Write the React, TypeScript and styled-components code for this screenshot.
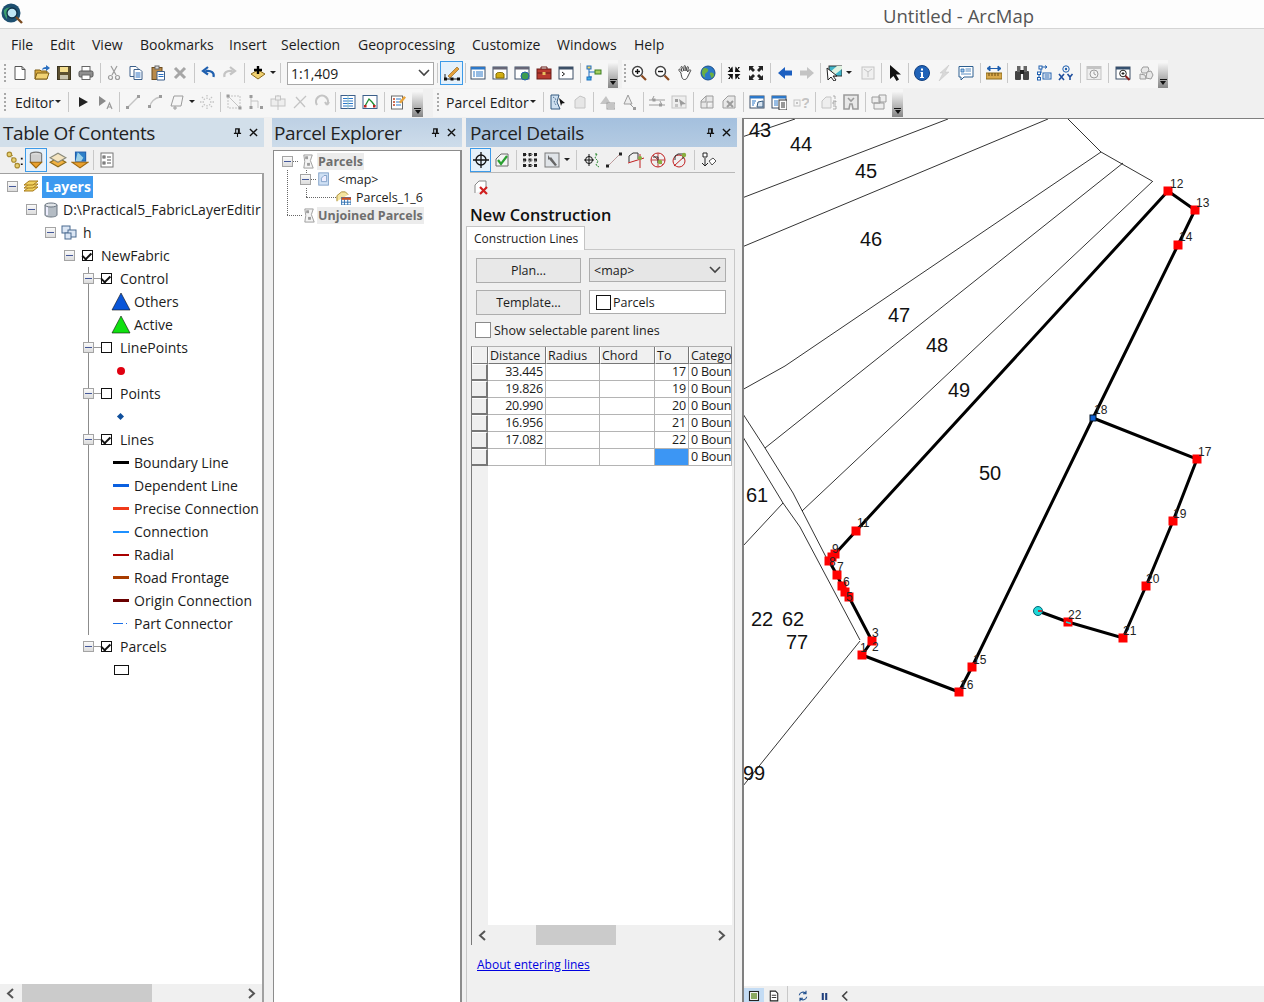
import React from "react";
import styled, { createGlobalStyle } from "styled-components";

const Global = createGlobalStyle`
  html, body { margin: 0; padding: 0; background: #f0f0f0; }
  #root { height: 1002px; overflow: hidden; }
  * { box-sizing: border-box; }
`;

const UI = `"Open Sans", "Noto Sans", "Liberation Sans", sans-serif`;
const D = "#c4c4c4";
const D2 = "#9c9c9c";

const win = (c = "#1f6fc0") => (
  <>
    <rect x="1" y="2" width="14" height="12" fill="#fff" stroke="#3c4f66" />
    <rect x="1" y="2" width="14" height="2.5" fill={c} />
  </>
);
const ghostParcel = <path d="M3 14V6l5-4 5 2v10z" fill="#e6e6e6" stroke={D} />;

const I: Record<string, React.ReactNode> = {
  new: <path d="M3 1.5h7l3 3v10H3zM10 1.5v3h3" fill="#fff" stroke="#555" />,
  open: (
    <>
      <path d="M1 5h5l1 1h6v8H1z" fill="#d9a93c" stroke="#7f5f16" />
      <path d="M1 14l2-6h12l-2 6z" fill="#f2d272" stroke="#7f5f16" />
      <path d="M8 5c0-2 2-3 4-3V0l4 3-4 3V4c-2 0-3 0-4 1z" fill="#2a6fc0" />
    </>
  ),
  save: (
    <>
      <rect x="1.5" y="1.5" width="13" height="13" fill="#5c5030" stroke="#3a3420" />
      <rect x="4" y="2" width="8" height="5" fill="#f3dd8e" />
      <rect x="4" y="10" width="8" height="4.5" fill="#c9c4b0" />
    </>
  ),
  print: (
    <>
      <rect x="4" y="1.5" width="8" height="5" fill="#fff" stroke="#666" />
      <rect x="1" y="6" width="14" height="6" rx="1.5" fill="#8f8f8f" stroke="#555" />
      <rect x="4" y="10" width="8" height="4.5" fill="#fff" stroke="#666" />
    </>
  ),
  cut: (
    <g stroke={D2} fill="none" strokeWidth="1.2">
      <path d="M5 1l5 9M11 1L6 10" />
      <circle cx="4.5" cy="12.5" r="2" />
      <circle cx="11.5" cy="12.5" r="2" />
    </g>
  ),
  copy: (
    <>
      <path d="M2 1.5h6l2 2v8H2z" fill="#fff" stroke="#3c5f8a" />
      <path d="M6 4.5h6l2 2v8H6z" fill="#fff" stroke="#3c5f8a" />
      <path d="M7.5 8h5M7.5 10h5M7.5 12h5" stroke="#2a6fc0" />
    </>
  ),
  paste: (
    <>
      <rect x="2" y="2.5" width="10" height="12" fill="#b98a4a" stroke="#6d4c1e" />
      <rect x="5" y="1" width="4" height="3" fill="#ddd" stroke="#666" />
      <path d="M7 6.5h7.5v8.5H7z" fill="#fff" stroke="#3c5f8a" />
      <path d="M8.5 9.5h5M8.5 11.5h5" stroke="#2a6fc0" />
    </>
  ),
  del: <path d="M3 3l10 10M13 3L3 13" stroke="#a6a6a6" strokeWidth="3" />,
  undo: <path d="M13.5 12c1-4-2-7-8-6M8 2L3 6l5 3.5" fill="none" stroke="#1f5fae" strokeWidth="2.2" />,
  redo: <path d="M2.5 12c-1-4 2-7 8-6M8 2l5 4-5 3.5" fill="none" stroke={D} strokeWidth="2.2" />,
  add: (
    <>
      <path d="M1 9l7-4 7 4-7 5z" fill="#f0d070" stroke="#8a6a1c" />
      <path d="M8 1v8M4 5h8" stroke="#000" strokeWidth="2.4" />
    </>
  ),
  edit: (
    <>
      <path d="M4 11L13 2l2 2-9 9z" fill="#e6a23c" stroke="#8a5a10" strokeWidth=".6" />
      <path d="M1 14h14" stroke="#222" />
      <path d="M1 9v5" stroke="#222" />
      <rect x="0" y="12.5" width="3" height="3" fill="#111" />
      <rect x="6.5" y="12.5" width="3" height="3" fill="#111" />
      <rect x="13" y="12.5" width="3" height="3" fill="#111" />
    </>
  ),
  list: (
    <>
      {win("#2d78c8")}
      <path d="M3 7h2M3 9h2M3 11h2M6 7h7M6 9h7M6 11h7" stroke="#2d78c8" />
    </>
  ),
  cat: (
    <>
      {win("#667")}
      <ellipse cx="8" cy="9" rx="4" ry="1.5" fill="#e2c020" stroke="#806a00" />
      <path d="M4 9v4h8V9" fill="#d0ac10" stroke="#806a00" />
    </>
  ),
  srch: (
    <>
      {win("#667")}
      <circle cx="11" cy="11" r="4" fill="#3c9c50" stroke="#1f5fae" />
    </>
  ),
  box: (
    <>
      <rect x="1" y="4" width="14" height="10" fill="#b93a30" stroke="#6a1c18" />
      <path d="M5 4V2h6v2M1 8h14" fill="none" stroke="#6a1c18" />
      <rect x="6.5" y="7" width="3" height="3" fill="#e8c060" />
    </>
  ),
  py: (
    <>
      {win("#3c4f66")}
      <path d="M4 7l2.5 2L4 11" fill="none" stroke="#111" />
    </>
  ),
  model: (
    <>
      <path d="M3 4v8h3M3 7h7" fill="none" stroke="#1f6fc0" />
      <rect x="1" y="1" width="4" height="3" fill="#f0d060" stroke="#1f6fc0" />
      <rect x="1" y="12" width="4" height="3" fill="#3fb0e0" stroke="#1f6fc0" />
      <rect x="9" y="5" width="6" height="4" fill="#a6d060" stroke="#3c7c20" />
    </>
  ),
  zin: (
    <>
      <circle cx="6.5" cy="6.5" r="5" fill="#fff" stroke="#444" strokeWidth="1.4" />
      <path d="M4 6.5h5M6.5 4v5" stroke="#111" strokeWidth="1.4" />
      <path d="M10.5 10.5l4.5 4.5" stroke="#8a4a20" strokeWidth="2.2" />
    </>
  ),
  zout: (
    <>
      <circle cx="6.5" cy="6.5" r="5" fill="#fff" stroke="#444" strokeWidth="1.4" />
      <path d="M4 6.5h5" stroke="#111" strokeWidth="1.4" />
      <path d="M10.5 10.5l4.5 4.5" stroke="#8a4a20" strokeWidth="2.2" />
    </>
  ),
  hand: (
    <path
      d="M4 8L2 5.5c-.8-1 .4-1.8 1.2-1L5 6.5 4 2.5c-.2-1.2 1.2-1.3 1.5-.3L7 6 7 1.5c0-1.2 1.5-1.2 1.5 0L9 6l1-3.8c.3-1 1.6-.7 1.4.4L10.500 7l1.800-2c.8-.8 1.900.1 1.200 1L11 11c-.8 2-1.500 3.500-3.500 3.500-2 0-2.800-1.500-3.500-6.500z"
      fill="#fff"
      stroke="#333"
      strokeWidth=".9"
    />
  ),
  globe: (
    <>
      <circle cx="8" cy="8" r="7" fill="#2a78c8" stroke="#1c4f8a" />
      <path d="M4 3c3 0 5 1 4 3S4 8 5 11s-3 0-3-3 1-4 2-5zM10 8c2-1 4 0 4 2s-3 4-3 2-2-3-1-4z" fill="#6cb040" />
    </>
  ),
  fzin: <path d="M2 2h2v2L6.500 1.500 7 7H1.500L4 4.500zM14 2h-2v2L9.500 1.500 9 7h5.500L12 4.500zM2 14h2v-2l2.500 2.500L7 9H1.500L4 11.500zM14 14h-2v-2l-2.500 2.500L9 9h5.500L12 11.500z" fill="#111" />,
  fzout: <path d="M1 1h5L4.500 2.500 7 5 5 7 2.500 4.500 1 6zM15 1h-5l1.500 1.500L9 5l2 2 2.500-2.500L15 6zM1 15h5l-1.500-1.500L7 11 5 9l-2.500 2.500L1 10zM15 15h-5l1.500-1.500L9 11l2-2 2.500 2.500L15 10z" fill="#222" />,
  back: <path d="M1 8l7-6v3.500h7v5H8V14z" fill="#1c5fc0" />,
  fwd: <path d="M15 8L8 2v3.500H1v5h7V14z" fill={D} />,
  sel: (
    <>
      <rect x="3" y="1" width="13" height="10" fill="#3fb4c8" stroke="#333" />
      <path d="M3 8l8-7h5v3L7 11H3z" fill="#dff2e0" />
      <path d="M1 3l1 12 3-3 3 4 2-1-3-4h4z" fill="#fff" stroke="#222" />
    </>
  ),
  clear: (
    <>
      <rect x="2" y="2" width="12" height="12" fill="#f0f0f0" stroke={D} />
      <path d="M4 4l4 3 4-3M8 7v5" fill="none" stroke={D} />
    </>
  ),
  arrow: <path d="M3 0l0 14 3.500-3 3 5 2.500-1.500-3-5H14z" fill="#111" />,
  info: (
    <>
      <circle cx="8" cy="8" r="7.500" fill="#1f62b8" stroke="#124080" />
      <path d="M7 3.500h2v2H7zM6.500 7H9v5h1v1H6v-1h1V8h-.5z" fill="#fff" />
    </>
  ),
  flash: <path d="M13 0L4 8h3l-4 8 10-9H9z" fill="#d8d8d8" stroke={D} strokeWidth=".5" />,
  html: (
    <>
      <path d="M1 1.500h14V12H6l-3 3v-3H1z" fill="#fff" stroke="#2d5f90" />
      <path d="M3 4h3v3H3zM7.500 4H13M7.500 6H13M3 9h10" fill="#9cc4e8" stroke="#2d6fb0" strokeWidth=".8" />
    </>
  ),
  measure: (
    <>
      <path d="M1 3.500h14M1 3.500l3-2.500v5zM15 3.500l-3-2.500v5z" fill="#1f5fae" stroke="#1f5fae" />
      <rect x="0" y="8" width="16" height="6" fill="#d8a84a" stroke="#8a6a1c" />
      <path d="M3 8v3M6 8v3M9 8v3M12 8v3" stroke="#6a4a10" />
    </>
  ),
  bin: (
    <>
      <rect x="1" y="6" width="6" height="9" rx="1" fill="#444" />
      <rect x="9" y="6" width="6" height="9" rx="1" fill="#444" />
      <rect x="3" y="1" width="3.500" height="6" fill="#666" />
      <rect x="9.500" y="1" width="3.500" height="6" fill="#666" />
      <rect x="6" y="5" width="4" height="4" fill="#222" />
    </>
  ),
  route: (
    <>
      <path d="M5 2h6l-2-1.500M11 2L9 3.500M5 2v6M3 8v5" fill="none" stroke="#1f5fae" />
      <rect x="3" y="1" width="3" height="3" fill="#fff" stroke="#1f5fae" />
      <rect x="1.500" y="7" width="3" height="2.500" fill="#fff" stroke="#1f5fae" />
      <rect x="1.500" y="12.500" width="3" height="2.500" fill="#fff" stroke="#1f5fae" />
      <rect x="7" y="8" width="8" height="6" fill="#fff" stroke="#1f5fae" />
      <path d="M8.500 10h5M8.500 12h5" stroke="#1f5fae" />
    </>
  ),
  xy: (
    <>
      <circle cx="8" cy="4" r="3.200" fill="none" stroke="#1f5fae" />
      <circle cx="8" cy="4" r="1.200" fill="#1f5fae" />
      <path d="M1 9l5 6M6 9l-5 6M9.500 9l2.500 3 2.500-3M12 12v3" fill="none" stroke="#1f4f9e" strokeWidth="1.600" />
    </>
  ),
  time: (
    <>
      <rect x="1" y="1.500" width="14" height="13" fill="#eee" stroke={D} />
      <rect x="1" y="1.500" width="14" height="2.500" fill={D} />
      <circle cx="8" cy="9" r="4" fill="#f4f4f4" stroke={D2} />
      <path d="M8 6.500V9l2 1" fill="none" stroke={D2} />
    </>
  ),
  viewer: (
    <>
      {win("#35506e")}
      <circle cx="8" cy="8.500" r="3.300" fill="#fff" stroke="#222" />
      <path d="M6.500 8.500h3M8 7v3" stroke="#222" />
      <path d="M10.500 11l4 4" stroke="#8a2020" strokeWidth="2" />
    </>
  ),
  comp: (
    <g fill="#e8e8e8" stroke={D2}>
      <path d="M5 2l5 0 1 3-2 3H4L3 5z" />
      <path d="M9 7l4-1 2 4-2 4-5-1z" />
      <path d="M2 9l5 1 1 4H2z" />
    </g>
  ),
  play: <path d="M4 3l9 5-9 5z" fill="#222" />,
  anno: (
    <>
      <path d="M2 2l7 5-7 5z" fill="#8a8a8a" />
      <path d="M10 15l2.500-6 2.500 6M11 13h3" fill="none" stroke={D2} strokeWidth="1.200" />
    </>
  ),
  seg: (
    <>
      <path d="M3 13L13 3" stroke={D} strokeWidth="1.400" />
      <rect x="1" y="12" width="3" height="3" fill={D2} />
      <rect x="12" y="1" width="3" height="3" fill={D2} />
    </>
  ),
  arc: (
    <>
      <path d="M3 13C3 8 8 4 13 3" fill="none" stroke={D} strokeWidth="1.400" />
      <rect x="1" y="11" width="3" height="3" fill={D2} />
      <rect x="12" y="1" width="3" height="3" fill={D2} />
    </>
  ),
  poly: (
    <>
      <path d="M5 2h9l-2 10H2z" fill="none" stroke={D2} />
      <path d="M6 12v4M4 14h4" stroke={D2} />
    </>
  ),
  expl: (
    <path d="M8 1v4M8 11v4M1 8h4M11 8h4M3 3l3 3M13 3l-3 3M3 13l3-3M13 13l-3-3" stroke={D} strokeWidth="1.300" strokeDasharray="1.500 1" />
  ),
  rot: (
    <>
      <path d="M2 2h12v12H2z" fill="none" stroke={D} strokeDasharray="2 1" />
      <path d="M2 2l12 12" stroke={D} />
      <rect x="0.500" y="0.500" width="3" height="3" fill={D2} />
      <rect x="12.500" y="12.500" width="3" height="3" fill={D2} />
    </>
  ),
  splt: (
    <>
      <path d="M3 2v12M10 7v7M3 7h7" stroke={D} />
      <rect x="1.500" y="1" width="3" height="3" fill={D2} />
      <rect x="1.500" y="12" width="3" height="3" fill={D2} />
      <rect x="12" y="12" width="3" height="3" fill={D2} />
    </>
  ),
  cross: (
    <>
      <rect x="1" y="5" width="14" height="7" fill="#eee" stroke={D} />
      <path d="M8 1v15" stroke={D} />
      <rect x="5.500" y="2" width="5" height="4" fill="#eee" stroke={D} />
    </>
  ),
  knife: <path d="M2 14L14 2M4 3l9 10" stroke={D} strokeWidth="1.300" />,
  circ: <path d="M3 11a6 6 0 1 1 10 0M13 11l-2-3M13 11l2-3" fill="none" stroke={D} strokeWidth="2.200" />,
  attr: (
    <>
      <rect x="1" y="1.500" width="14" height="13" fill="#fff" stroke="#3c5f8a" />
      <path d="M3 4.500h10M3 7h10M3 9.500h10M3 12h10" stroke="#2d78c8" />
      <path d="M8 1.500v13" stroke="#9cc" />
    </>
  ),
  sketch: (
    <>
      <rect x="1" y="1.500" width="14" height="13" fill="#fff" stroke="#3c5f8a" />
      <path d="M3 12l4-7 3 3 3 4" fill="none" stroke="#1e8a30" strokeWidth="1.300" />
      <rect x="2" y="11" width="2.500" height="2.500" fill="#c02020" />
      <rect x="11" y="11" width="2.500" height="2.500" fill="#c02020" />
    </>
  ),
  task: (
    <>
      <rect x="1.500" y="2" width="11" height="13" fill="#fff" stroke="#6a6a6a" />
      <path d="M3 5h2M3 8h2M3 11h2" stroke="#c04020" strokeWidth="1.500" />
      <path d="M6 5h5M6 8h5M6 11h5" stroke="#2d78c8" />
      <path d="M9 8l5-6 2 1.500-5 6z" fill="#e6a23c" />
    </>
  ),
  pe1: (
    <>
      <path d="M1 1h8l-2 7 3 7H1z" fill="#cfe0f0" stroke="#345a80" />
      <path d="M3 3l3 2-2 3 2 3" fill="none" stroke="#345a80" strokeDasharray="1 1" />
      <path d="M9 4l6 5-3 .5L11 12z" fill="#111" />
    </>
  ),
  pe2: ghostParcel,
  tri: (
    <>
      <path d="M7 2l5 8H1z" fill={D} />
      <rect x="8" y="9" width="8" height="6" fill="#eee" stroke={D2} />
      <path d="M9 11h6M9 13h6" stroke={D2} />
    </>
  ),
  tri2: (
    <>
      <path d="M7 1L3 10h8z" fill="#eee" stroke={D2} />
      <path d="M9 10l4 4" stroke={D2} />
      <rect x="12" y="13" width="3" height="3" fill={D2} />
    </>
  ),
  jog: (
    <>
      <path d="M0 6h16M0 11h16" stroke={D2} />
      <path d="M5 2l-2 4M11 7l2 4" stroke={D2} />
      <rect x="3.500" y="4.500" width="3" height="3" fill={D2} />
      <rect x="10" y="9.500" width="3" height="3" fill={D2} />
    </>
  ),
  mvto: (
    <>
      <rect x="1" y="2" width="14" height="12" fill="#eee" stroke={D} />
      <rect x="4" y="5" width="3" height="3" fill={D2} />
      <rect x="4" y="10" width="3" height="3" fill={D} />
      <path d="M8 5l7 5-4 .5-1 3z" fill={D2} />
    </>
  ),
  p3: <path d="M2 14V7l5-5h7v12zM7 2v6H2M14 8H8v6" fill="#e8e8e8" stroke={D2} />,
  p4: (
    <>
      <path d="M2 14V7l5-5h7v12z" fill="#e8e8e8" stroke={D2} />
      <path d="M6 7l6 6M12 7l-6 6" stroke={D2} strokeWidth="2" />
    </>
  ),
  pwin: (
    <>
      {win("#2d78c8")}
      <path d="M3 7h4M3 9h3M3 11h2" stroke="#2d78c8" />
      <path d="M8 13l1-5 5-1v6z" fill="#d8e4f0" stroke="#345a80" />
    </>
  ),
  pwin2: (
    <>
      {win("#2d78c8")}
      <path d="M3 7h4M3 9h4M3 11h4" stroke="#2d78c8" />
      <rect x="8" y="6" width="8" height="10" fill="#fff" stroke="#333" />
      <path d="M10 9h4M10 11h4M10 13h4" stroke="#333" />
    </>
  ),
  q: (
    <>
      <rect x="1" y="6" width="6" height="6" fill="none" stroke={D} />
      <rect x="3" y="8" width="2" height="2" fill={D} />
      <text x="8" y="14" fontFamily="Liberation Sans" fontSize="15" fontWeight="700" fill={D}>?</text>
    </>
  ),
  p123: (
    <>
      <path d="M1 14V7l4-4h5v11z" fill="#eee" stroke={D} />
      <path d="M12 2h2v3M12 7h3v1h-3v2h3M12 12h3v3h-3" fill="none" stroke={D2} strokeWidth=".8" />
    </>
  ),
  pg: (
    <g fill="none" stroke={D2} strokeWidth="1.600">
      <path d="M1 1h14v14h-5l-1-5H7l-1 5H1z" fill="#e8e8e8" />
      <path d="M5 4l3 3 3-3" />
    </g>
  ),
  pg2: (
    <g fill="#eee" stroke={D2}>
      <path d="M1 3h8v6H1zM8 1h7v7H8zM3 9h10v6H3z" />
    </g>
  ),
  tocA: (
    <>
      <path d="M3 4h3M4 4l6 9" stroke="#a88a30" strokeDasharray="1 1" />
      <rect x="1" y="1" width="4" height="4" rx="2" fill="#e8d070" stroke="#a88a30" />
      <rect x="5" y="6" width="4" height="4" rx="2" fill="#e8d070" stroke="#a88a30" />
      <rect x="8" y="11" width="4" height="4" rx="2" fill="#e8d070" stroke="#a88a30" />
      <path d="M14 6v1.500M14 11v1.500" stroke="#111" strokeWidth="1.600" />
    </>
  ),
  tocB: (
    <>
      <ellipse cx="8" cy="3" rx="5" ry="2" fill="#ddd" stroke="#777" />
      <path d="M3 3v6c0 1 2 2 5 2s5-1 5-2V3" fill="#cfcfcf" stroke="#777" />
      <path d="M3 10l5 5 5-5z" fill="#e8a030" stroke="#a06a10" />
    </>
  ),
  tocC: (
    <>
      <path d="M1 10l7 4 7-4-7-4z" fill="#f0b040" stroke="#8a6a1c" />
      <path d="M1 6l7-4 7 4-7 4z" fill="#f4e4c0" stroke="#8a8a7a" />
    </>
  ),
  tocD: (
    <>
      <rect x="4" y="1" width="9" height="8" fill="#2d80c8" stroke="#1f5fae" />
      <path d="M6 1l5 5-2 3H4z" fill="#9cd0e8" />
      <path d="M1 10l7 5 7-5z" fill="#e8a030" stroke="#a06a10" />
    </>
  ),
  tocE: (
    <>
      <rect x="2" y="1" width="12" height="14" fill="#fff" stroke="#777" />
      <rect x="4" y="4" width="2" height="2" fill="none" stroke="#555" />
      <rect x="4" y="10" width="2" height="2" fill="none" stroke="#555" />
      <path d="M8 5h4M8 8h4M8 11h4" stroke="#555" />
    </>
  ),
  layers: (
    <g fill="#f0d060" stroke="#a87a18">
      <path d="M1 12l5-4h9l-5 4z" />
      <path d="M1 9l5-4h9l-5 4z" />
      <path d="M1 6l5-4h9l-5 4z" />
    </g>
  ),
  db: (
    <>
      <path d="M2 3v10c0 1 2.500 2 6 2s6-1 6-2V3z" fill="#b4bcc4" stroke="#6a7480" />
      <path d="M4 4v9" stroke="#eef" strokeWidth="2" />
      <ellipse cx="8" cy="3" rx="6" ry="2" fill="#e0e4e8" stroke="#6a7480" />
    </>
  ),
  fds: (
    <g fill="#dbe6f4" stroke="#4a6a90">
      <rect x="1" y="1" width="8" height="7" />
      <rect x="7" y="5" width="8" height="7" />
      <rect x="4" y="8" width="6" height="6" />
    </g>
  ),
  par: (
    <g fill="#f4f4f4" stroke={D2}>
      <path d="M3 1h9l-2 6 3 8H3l1-7z" />
      <rect x="5" y="3" width="2" height="2" fill={D2} />
      <rect x="7" y="10" width="2" height="2" fill={D2} />
    </g>
  ),
  plan: (
    <>
      <rect x="2" y="1" width="11" height="14" fill="#cfe0f4" stroke="#7a9cc4" />
      <path d="M5 11V7l3-3h3v7z" fill="#eef" stroke="#7a9cc4" />
    </>
  ),
  tbl: (
    <>
      <path d="M1 12V6l5-4h4l3 3" fill="#f4e4a0" stroke="#a88a30" />
      <rect x="6" y="8" width="10" height="8" fill="#fff" stroke="#2d6fb0" />
      <rect x="6" y="8" width="10" height="2.500" fill="#d05020" />
      <path d="M6 13h10M9 10v6M12.500 10v6" stroke="#2d6fb0" />
    </>
  ),
  cross2: (
    <>
      <circle cx="8" cy="8" r="5" fill="none" stroke="#111" strokeWidth="1.300" />
      <path d="M8 0v16M0 8h16" stroke="#111" strokeWidth="1.300" />
    </>
  ),
  chk: (
    <>
      <path d="M2 14V7l5-5h7v12z" fill="#f4f4f4" stroke="#6a6a6a" />
      <path d="M4 8l3 4 6-8" fill="none" stroke="#2aa030" strokeWidth="2.200" />
    </>
  ),
  gridd: (
    <g fill="#222">
      {[1, 6.500, 12].map((x) =>
        [1, 6.500, 12].map((y) => <rect key={`${x}${y}`} x={x} y={y} width="3" height="3" />)
      )}
      <path d="M2 4v8M7.500 4v8M13 4v8M4 2.500h8M4 8h8M4 13.500h8" stroke="#888" strokeDasharray="1 1" strokeWidth=".8" fill="none" />
    </g>
  ),
  wrench: (
    <>
      <rect x="1" y="1" width="14" height="14" fill="#e0e4e8" stroke="#7a7a7a" />
      <path d="M4 3l2 3 1-1 6 8-2 1-6-7-1 1z" fill="#666" />
    </>
  ),
  tr1: (
    <>
      <circle cx="5" cy="8" r="3.500" fill="none" stroke="#111" />
      <path d="M5 2v12M0 8h10" stroke="#111" />
      <path d="M11 2h3M13 2l-2 4 3 3-2 4 3 2" fill="none" stroke="#2a8a30" strokeDasharray="2 1" />
    </>
  ),
  tr2: (
    <>
      <path d="M2 14L14 2" stroke="#e0a0a0" />
      <path d="M3 13L13 3" stroke="#999" strokeDasharray="1 1" />
      <rect x="0" y="12.500" width="3" height="3" fill="#222" />
      <rect x="13" y="0.500" width="3" height="3" fill="#222" />
    </>
  ),
  tr3: (
    <>
      <path d="M1 10V4l4-3h5v6" fill="none" stroke="#333" />
      <path d="M0 11l16-5" stroke="#c02020" />
      <path d="M12 2v14" stroke="#c02020" />
      <circle cx="12" cy="6" r="2" fill="#8ab040" />
    </>
  ),
  tr4: (
    <>
      <circle cx="8" cy="8" r="7" fill="none" stroke="#c02020" />
      <path d="M8 1v14M1 8h14M3 3l10 10" stroke="#c04040" />
      <path d="M3 5h5v6" fill="none" stroke="#333" />
      <circle cx="10" cy="10" r="2.200" fill="#8ab040" />
    </>
  ),
  tr5: (
    <>
      <circle cx="7" cy="9" r="6" fill="none" stroke="#c02020" />
      <path d="M2 14L14 3" stroke="#c02020" />
      <path d="M3 8V4l3-2h5v5" fill="none" stroke="#333" />
      <circle cx="12" cy="3" r="2.200" fill="#8ab040" />
    </>
  ),
  tr6: (
    <>
      <path d="M3 1h4v4H3z" fill="#fff" stroke="#222" />
      <path d="M5 6v8M2 11l3 3 3-3" fill="none" stroke="#222" />
      <path d="M9 9l4-3 3 3-4 4z" fill="#fff" stroke="#555" />
    </>
  ),
  pdel: (
    <>
      <path d="M2 14V6l4-4h7v8" fill="#fff" stroke="#888" />
      <path d="M7 8l7 7M14 8l-7 7" stroke="#d02020" strokeWidth="2.200" />
    </>
  ),
  stA: (
    <>
      <rect x="2" y="2" width="12" height="12" fill="#fff" stroke="#222" strokeWidth="1.500" />
      <rect x="4" y="4" width="8" height="8" fill="#8aa860" />
    </>
  ),
  stB: (
    <>
      <path d="M3 1.500h7l3 3v10H3z" fill="#fff" stroke="#222" strokeWidth="1.400" />
      <path d="M5 7h6M5 10h6" stroke="#222" strokeWidth="1.200" />
    </>
  ),
  stC: <path d="M3 7a5 5 0 0 1 9-2M13 9a5 5 0 0 1-9 2M12 1v4H8M4 15v-4h4" fill="none" stroke="#1f4f8e" strokeWidth="1.500" />,
  stD: <path d="M4 3h3v10H4zM9 3h3v10H9z" fill="#1f3f7e" />,
  stE: <path d="M11 2L5 8l6 6" fill="none" stroke="#444" strokeWidth="2.200" />,
};

const Ico = ({ n, s = 16 }: { n: string; s?: number }) => (
  <svg width={s} height={s} viewBox="0 0 16 16" aria-hidden="true">
    {I[n]}
  </svg>
);

const Page = styled.div`
  width: 1264px;
  height: 1002px;
  display: flex;
  flex-direction: column;
  background: #f0f0f0;
  font-family: ${UI};
  color: #1c1c1c;
  overflow: hidden;
`;
const TitleBar = styled.header`
  height: 29px;
  flex: none;
  display: flex;
  align-items: center;
  padding-left: 1px;
  background: #fdfdfd;
  border-bottom: 1px solid #d4d4d4;
`;
const Title = styled.div`
  flex: 1;
  text-align: right;
  padding-right: 230px;
  font-size: 18.500px;
  color: #555;
  padding-top: 2px;
`;
const MenuBar = styled.nav`
  height: 31px;
  flex: none;
  display: flex;
  align-items: center;
  padding-left: 11px;
`;
const MenuItem = styled.span<{ $w: number }>`
  width: ${(p) => p.$w}px;
  font-size: 14px;
  white-space: nowrap;
`;
const ToolRow = styled.div`
  height: 29px;
  flex: none;
  display: flex;
  align-items: stretch;
`;
const Bar = styled.div<{ $gap?: number }>`
  display: flex;
  align-items: center;
  background: #f6f6f6;
  margin-left: ${(p) => p.$gap ?? 0}px;
  padding-bottom: 2px;
  height: 28px;
`;
const Grip = styled.span<{ $w: number }>`
  flex: none;
  width: ${(p) => p.$w}px;
  height: 18px;
  background: repeating-linear-gradient(#a8a8a8 0 2px, transparent 2px 4px) center / 2px 100% no-repeat;
`;
const Tool = styled.span<{ $w: number; $on?: boolean }>`
  flex: none;
  width: ${(p) => p.$w}px;
  height: 24px;
  display: flex;
  align-items: center;
  justify-content: center;
  ${(p) => (p.$on ? "background:#e5f1fb;border:1px solid #3c9ae8;" : "")}
`;
const Sep = styled.span<{ $w: number }>`
  flex: none;
  width: ${(p) => p.$w}px;
  height: 20px;
  background: linear-gradient(#c8c8c8, #c8c8c8) center / 1px 100% no-repeat;
`;
const Spacer = styled.span<{ $w: number }>`
  flex: none;
  width: ${(p) => p.$w}px;
`;
const Drop = styled.span`
  flex: none;
  width: 8px;
  height: 4px;
  display: flex;
  justify-content: center;
  &::before {
    content: "";
    border: 3px solid transparent;
    border-top: 3px solid #222;
    border-bottom: 0;
  }
`;
const More = styled.span<{ $w: number; $ml: number }>`
  flex: none;
  align-self: flex-start;
  width: ${(p) => p.$w}px;
  margin: 3px 0 -2px ${(p) => p.$ml}px;
  height: 25px;
  background: linear-gradient(#f4f4f4, #868686);
  display: flex;
  flex-direction: column;
  align-items: center;
  justify-content: flex-end;
  gap: 1px;
  padding-bottom: 3px;
  &::before {
    content: "";
    width: 7px;
    height: 1px;
    background: #111;
  }
  &::after {
    content: "";
    border: 3.500px solid transparent;
    border-top: 4px solid #111;
    border-bottom: 0;
  }
`;
const BarText = styled.span<{ $w: number; $pl: number }>`
  flex: none;
  width: ${(p) => p.$w}px;
  padding-left: ${(p) => p.$pl}px;
  font-size: 14px;
  white-space: nowrap;
  display: flex;
  align-items: center;
`;
const Combo = styled.div`
  flex: none;
  width: 147px;
  height: 23px;
  margin-left: 4px;
  background: #fff;
  border: 1px solid #a8a8a8;
  font-size: 14px;
  display: flex;
  align-items: center;
  justify-content: space-between;
  padding: 0 3px 0 3px;
`;
const Chevron = styled.svg`
  flex: none;
  width: 12px;
  height: 8px;
`;

const items = (list: string) =>
  list.split(" ").map((t, i) => {
    const [n, v] = t.split(":");
    const w = v ? Number(v) : 22;
    if (n === "sep") return <Sep key={i} $w={w} />;
    if (n === "gap") return <Spacer key={i} $w={w} />;
    if (n === "grip") return <Grip key={i} $w={w} />;
    if (n === "drop") return <Drop key={i} />;
    return (
      <Tool key={i} $w={w}>
        <Ico n={n} />
      </Tool>
    );
  });

const Panels = styled.main`
  flex: 1;
  min-height: 0;
  display: flex;
`;
const Panel = styled.section<{ $w: number; $gap?: number }>`
  flex: none;
  width: ${(p) => p.$w}px;
  margin-right: ${(p) => p.$gap ?? 0}px;
  display: flex;
  flex-direction: column;
`;
const PanelHead = styled.div<{ $c: string; $pad?: number }>`
  flex: none;
  height: 29px;
  background: ${(p) => p.$c};
  display: flex;
  align-items: center;
  justify-content: space-between;
  padding: 0 6px 0 ${(p) => p.$pad ?? 3}px;
`;
const PanelTitle = styled.h2`
  margin: 0;
  font-size: 19px;
  font-weight: 400;
  letter-spacing: -0.420px;
  color: #222;
  white-space: nowrap;
`;
const HeadBtns = styled.span`
  display: flex;
  gap: 7px;
  align-items: center;
`;
const Mini = styled.svg`
  width: 9px;
  height: 9px;
`;
const Head = ({ t, c, pad }: { t: string; c: string; pad?: number }) => (
  <PanelHead $c={c} $pad={pad}>
    <PanelTitle>{t}</PanelTitle>
    <HeadBtns>
      <Mini viewBox="0 0 10 10">
        <path d="M3 1h4v5H3zM1 6h8M5 6v4M6 1v5" fill="none" stroke="#111" strokeWidth="1.200" />
      </Mini>
      <Mini viewBox="0 0 10 10">
        <path d="M1 1l8 8M9 1l-8 8" stroke="#111" strokeWidth="1.500" />
      </Mini>
    </HeadBtns>
  </PanelHead>
);

const PaneBar = styled.div`
  height: 26px;
  flex: none;
  display: flex;
  align-items: center;
  padding-left: 4px;
`;
const TreeBox = styled.div`
  flex: 1;
  min-height: 0;
  background: #fff;
  border-top: 1px solid #a0a0a0;
  border-right: 2px solid #a0a0a0;
  display: flex;
  flex-direction: column;
`;
const TreeBody = styled.div`
  flex: 1;
  min-height: 0;
  padding-top: 1px;
  overflow: hidden;
`;
const Row = styled.div<{ $i: number; $trunk?: boolean }>`
  height: 23px;
  display: flex;
  align-items: center;
  padding-left: ${(p) => p.$i}px;
  font-size: 14px;
  white-space: nowrap;
  ${(p) => (p.$trunk ? "background: linear-gradient(#8c8c8c,#8c8c8c) 88px 0 / 1px 100% no-repeat;" : "")}
`;
const Exp = styled.span`
  flex: none;
  width: 11px;
  height: 11px;
  border: 1px solid #a4a4a4;
  background: linear-gradient(#fafafa, #dcdcdc);
  display: flex;
  align-items: center;
  justify-content: center;
  &::before {
    content: "";
    width: 7px;
    height: 1px;
    background: #44589a;
  }
`;
const Hook = styled.span<{ $w: number }>`
  flex: none;
  width: ${(p) => p.$w}px;
  height: 1px;
  background: #9a9a9a;
`;
const Check = styled.span<{ $on?: boolean }>`
  flex: none;
  width: 11px;
  height: 11px;
  border: 1px solid #111;
  background: #fff;
  margin-right: 8px;
  display: flex;
  align-items: center;
  justify-content: center;
  &::before {
    content: "";
    display: ${(p) => (p.$on ? "block" : "none")};
    width: 7px;
    height: 4px;
    border-left: 2px solid #111;
    border-bottom: 2px solid #111;
    transform: rotate(-45deg) translate(0, -1px);
  }
`;
const Sel = styled.span`
  background: #3c9af0;
  color: #fff;
  font-weight: 700;
  padding: 0 2px 0 3px;
  line-height: 22px;
  margin-left: 1px;
`;
const IconSlot = styled.span<{ $w: number }>`
  flex: none;
  width: ${(p) => p.$w}px;
  display: flex;
  align-items: center;
`;
const Sym = styled.span<{ $w?: number }>`
  flex: none;
  width: ${(p) => p.$w ?? 21}px;
  display: flex;
  align-items: center;
`;
const LineSw = styled.span<{ $c: string; $h: number; $dash?: boolean }>`
  width: 16px;
  height: ${(p) => p.$h}px;
  background: ${(p) =>
    p.$dash
      ? `linear-gradient(90deg, ${p.$c} 0 10px, transparent 10px 13px, ${p.$c} 13px 14px, transparent 14px)`
      : p.$c};
`;
const Dot = styled.span`
  width: 8px;
  height: 8px;
  border-radius: 50%;
  margin-left: 4px;
  background: #e00010;
`;
const Diamond = styled.span`
  width: 5px;
  height: 5px;
  margin-left: 5px;
  transform: rotate(45deg);
  background: #0f4f9c;
`;
const Swatch = styled.span`
  width: 15px;
  height: 10px;
  border: 1px solid #111;
  background: #fff;
`;
const HScroll = styled.div<{ $h: number }>`
  flex: none;
  height: ${(p) => p.$h}px;
  background: #f0f0f0;
  display: flex;
  align-items: center;
  justify-content: space-between;
  position: relative;
  padding: 0 6px;
`;
const Thumb = styled.span<{ $l: number; $w: number }>`
  position: absolute;
  top: 0;
  bottom: 0;
  left: ${(p) => p.$l}px;
  width: ${(p) => p.$w}px;
  background: #cbcbcb;
`;
const Chev = ({ d }: { d: "l" | "r" }) => (
  <svg width="9" height="11" viewBox="0 0 9 11" aria-hidden="true">
    <path d={d === "l" ? "M7 1L2 5.500l5 4.500" : "M2 1l5 4.500L2 10"} fill="none" stroke="#555" strokeWidth="2" />
  </svg>
);

const ExplBox = styled.div`
  flex: 1;
  margin-top: 3px;
  margin-left: 1px;
  background: #fff;
  border: 1px solid #8c8c8c;
  border-right: 2px solid #8c8c8c;
  border-bottom: 0;
  padding-top: 1px;
`;
const dots = `repeating-linear-gradient(#666 0 1px, transparent 1px 2px)`;
const ExRow = styled.div<{ $i: number; $v?: string }>`
  height: 18px;
  display: flex;
  align-items: center;
  padding-left: ${(p) => p.$i}px;
  font-size: 12.500px;
  white-space: nowrap;
  background-repeat: no-repeat;
  ${(p) => {
    if (p.$v === "map") return `background-image:${dots},${dots};background-size:1px 100%,1px 5px;background-position:13px 0,32px 0;`;
    if (p.$v === "tbl") return `background-image:${dots},${dots};background-size:1px 100%,1px 9px;background-position:13px 0,32px 0;`;
    if (p.$v === "end") return `background-image:${dots};background-size:1px 9px;background-position:13px 0;`;
    return "";
  }}
`;
const DotLine = styled.span<{ $w: number }>`
  flex: none;
  width: ${(p) => p.$w}px;
  border-top: 1px dotted #666;
`;
const ExLabel = styled.span<{ $dim?: boolean }>`
  ${(p) =>
    p.$dim ? "background:#ececec;color:#6e6e6e;font-weight:700;padding:0 1px;font-size:12.500px;" : ""}
`;

const Section = styled.h3`
  margin: 0;
  padding: 4px 0 0 4px;
  height: 26px;
  flex: none;
  font-size: 16.300px;
  font-weight: 600;
  color: #111;
  white-space: nowrap;
`;
const DetailBar = styled.div`
  flex: none;
  height: 26px;
  margin-left: 4px;
  margin-right: 2px;
  display: flex;
  align-items: center;
  border-bottom: 1px solid #b8b8b8;
`;
const IconLine = styled.div`
  flex: none;
  height: 27px;
  padding-left: 7px;
  display: flex;
  align-items: center;
`;
const Tab = styled.div`
  flex: none;
  width: 119px;
  height: 24px;
  background: #fff;
  border: 1px solid #c4c4c4;
  border-bottom: 0;
  font-size: 12px;
  display: flex;
  align-items: center;
  padding-left: 7px;
  margin-bottom: -1px;
  position: relative;
  z-index: 1;
`;
const TabPanel = styled.div`
  flex: 1;
  min-height: 0;
  width: 269px;
  border: 1px solid #c8c8c8;
  border-bottom: 0;
  padding: 8px 0 0 4px;
  display: flex;
  flex-direction: column;
`;
const FormRow = styled.div`
  flex: none;
  display: grid;
  grid-template-columns: 105px 137px;
  column-gap: 8px;
  padding-left: 5px;
  height: 32px;
  align-items: start;
`;
const Btn = styled.button`
  height: 25px;
  border: 1px solid #adadad;
  background: #e8e8e8;
  font: 12.500px ${UI};
  color: #1c1c1c;
  padding: 0;
`;
const SelectBox = styled.div`
  height: 24px;
  border: 1px solid #adadad;
  background: #e6e6e6;
  font-size: 12.500px;
  display: flex;
  align-items: center;
  justify-content: space-between;
  padding: 0 4px;
`;
const FieldBox = styled.div`
  height: 24px;
  border: 1px solid #adadad;
  background: #fff;
  font-size: 12.500px;
  display: flex;
  align-items: center;
  gap: 2px;
  padding-left: 6px;
`;
const SwatchBig = styled.span`
  width: 15px;
  height: 15px;
  border: 1px solid #111;
  background: #fff;
`;
const CheckLine = styled.label`
  flex: none;
  height: 24px;
  display: flex;
  align-items: center;
  gap: 3px;
  font-size: 12.500px;
  padding-left: 4px;
  margin-top: -4px;
`;
const BigCheck = styled.span`
  width: 16px;
  height: 16px;
  border: 1px solid #8a8a8a;
  background: #fff;
`;
const GridFrame = styled.div`
  flex: none;
  margin-top: 4px;
  height: 599px;
  width: 261px;
  border-left: 1px solid #7a7a7a;
  border-top: 1px solid #b0b0b0;
  display: flex;
  flex-direction: column;
  background: #fff;
`;
const GridRow = styled.div`
  flex: none;
  height: 17px;
  display: grid;
  grid-template-columns: 16px 58px 54px 55px 34px 43px;
  overflow: hidden;
`;
const HCell = styled.div`
  background: #f0f0f0;
  border-right: 1px solid #777;
  border-bottom: 1px solid #777;
  border-left: 1px solid #fff;
  font-size: 12.500px;
  line-height: 18px;
  padding-left: 1px;
  white-space: nowrap;
  overflow: hidden;
`;
const Cell = styled.div<{ $r?: boolean; $sel?: boolean }>`
  border-right: 1px solid #b4b4b4;
  border-bottom: 1px solid #b4b4b4;
  font-size: 12.500px;
  line-height: 16px;
  padding: 0 2px 0 2px;
  text-align: ${(p) => (p.$r ? "right" : "left")};
  white-space: nowrap;
  overflow: hidden;
  letter-spacing: -0.200px;
  background: ${(p) => (p.$sel ? "#3c96f4" : "#fff")};
`;
const Gutter = styled.div`
  background: #efefef;
  border-right: 2px solid #777;
  border-bottom: 2px solid #777;
  border-top: 1px solid #fff;
`;
const GridFill = styled.div`
  flex: 1;
  background: linear-gradient(#f0f0f0, #f0f0f0) 0 0 / 16px 100% no-repeat #fff;
`;
const LinkLine = styled.a`
  flex: none;
  margin: 11px 0 0 6px;
  font-size: 12px;
  color: #0000e0;
  text-decoration: underline;
`;

const MapWrap = styled.section`
  flex: 1;
  min-width: 0;
  display: flex;
  flex-direction: column;
  border-left: 2px solid #808080;
`;
const MapCanvas = styled.svg`
  flex: none;
  width: 520px;
  height: 868px;
  display: block;
  background: #fff;
  border-top: 1px solid #808080;
`;
const Status = styled.div`
  flex: 1;
  display: flex;
  align-items: center;
  background: #f0f0f0;
`;
const StatusBtn = styled.span<{ $on?: boolean; $w: number }>`
  width: ${(p) => p.$w}px;
  height: 16px;
  display: flex;
  align-items: center;
  justify-content: center;
  background: ${(p) => (p.$on ? "#c4dcf4" : "transparent")};
`;

const NEW_TOOLS = "grip:9 new open save print sep:6 cut copy paste del sep:6 undo redo sep:6 add drop sep:6";
const R1B = "grip:5 zin:23 zout:23 hand:23 globe:23 sep:4 fzin fzout sep:7 back fwd sep:5 sel drop gap:4 clear sep:5 arrow sep:5 info flash html sep:6 measure sep:5 bin:23 route:22 xy:22 sep:6 time sep:6 viewer:23 comp:23";
const R2A = "sep:8 play anno sep:6 seg arc poly drop expl sep:5 rot splt cross knife circ sep:4 attr sketch sep:6 task";
const R2B = "sep:8 pe1 pe2 sep:5 tri tri2 sep:6 jog mvto sep:6 p3 p4 sep:6 pwin pwin2 q sep:6 p123 pg sep:6 pg2";

const thin =
  "M742 137L795 119M742 198L948 119M742 247L1048 119M1068 119L1101 152L1152 181M1101 152L785 366L742 390M1123 163L765 448M1153 181L802 511M743 414L765 448L793 493L826 557M743 437L783 503L800 527L860 640M743 546L783 503M860 641L743 786";
const thick =
  "M1168 191L1195 210L1178 245L1093 418L972 667L959 692L862 655L872 641L849 597L845 592L842 586L837 575L829 561L835 554L856 531L1168 191M1093 418L1197 459L1173 521L1146 586L1123 638L1068 622L1038 611";
const big: [string, number, number][] = [
  ["43", 749, 137], ["44", 790, 151], ["45", 855, 178], ["46", 860, 246], ["47", 888, 322],
  ["48", 926, 352], ["49", 948, 397], ["50", 979, 480], ["61", 746, 502], ["22", 751, 626],
  ["62", 782, 626], ["77", 786, 649], ["99", 743, 780],
];
const nodes: [number, number][] = [
  [1168, 191], [1195, 210], [1178, 245], [1197, 459], [1173, 521], [1146, 586], [1123, 638], [1068, 622],
  [972, 667], [959, 692], [862, 655], [872, 641], [849, 597], [845, 592], [842, 586], [837, 575],
  [829, 561], [832, 557], [835, 554], [856, 531],
];
const small: [string, number, number][] = [
  ["12", 1170, 188], ["13", 1196, 207], ["14", 1179, 241], ["18", 1094, 414], ["17", 1198, 456],
  ["19", 1173, 518], ["20", 1146, 583], ["21", 1123, 635], ["22", 1068, 619], ["15", 973, 664],
  ["16", 960, 689], ["11", 857, 527], ["9", 832, 553], ["8", 829, 566], ["7", 837, 571],
  ["6", 843, 586], ["5", 846, 601], ["3", 872, 637], ["2", 872, 651], ["1", 860, 652],
];

const lines: [string, string, number, boolean?][] = [
  ["Boundary Line", "#000", 3],
  ["Dependent Line", "#0a60e0", 3],
  ["Precise Connection", "#f03a1a", 3],
  ["Connection", "#1e90ff", 2],
  ["Radial", "#a80000", 2],
  ["Road Frontage", "#a83c00", 3],
  ["Origin Connection", "#6a0000", 3],
  ["Part Connector", "#1a6fe8", 1, true],
];

const table: [string, string][] = [
  ["33.445", "17"], ["19.826", "19"], ["20.990", "20"], ["16.956", "21"], ["17.082", "22"], ["", ""],
];

const Tri = ({ c }: { c: string }) => (
  <svg width="20" height="19" viewBox="0 0 20 19" aria-hidden="true">
    <path d="M10 1L19 18H1z" fill={c} stroke="#111" strokeWidth=".6" />
  </svg>
);

export default function App() {
  return (
    <Page>
      <Global />
      <TitleBar>
        <svg width="22" height="22" viewBox="0 0 22 22" aria-hidden="true">
          <circle cx="10" cy="10" r="9.500" fill="#1d4f70" />
          <path d="M3 7c4-4 9-3 8 1s-6 3-5 7-4-4-3-8z" fill="#3ca070" />
          <circle cx="11" cy="10" r="5" fill="#bfe6f4" stroke="#0f3048" strokeWidth="1.300" />
          <path d="M15 14l6 6" stroke="#7a4a20" strokeWidth="2.400" />
        </svg>
        <Title>Untitled - ArcMap</Title>
      </TitleBar>
      <MenuBar>
        <MenuItem $w={39}>File</MenuItem>
        <MenuItem $w={42}>Edit</MenuItem>
        <MenuItem $w={48}>View</MenuItem>
        <MenuItem $w={89}>Bookmarks</MenuItem>
        <MenuItem $w={52}>Insert</MenuItem>
        <MenuItem $w={77}>Selection</MenuItem>
        <MenuItem $w={114}>Geoprocessing</MenuItem>
        <MenuItem $w={85}>Customize</MenuItem>
        <MenuItem $w={77}>Windows</MenuItem>
        <MenuItem $w={40}>Help</MenuItem>
      </MenuBar>
      <ToolRow>
        <Bar>
          {items(NEW_TOOLS)}
          <Combo>
            1:1,409
            <Chevron viewBox="0 0 12 8">
              <path d="M1 1l5 5 5-5" fill="none" stroke="#444" strokeWidth="1.600" />
            </Chevron>
          </Combo>
          <Sep $w={6} />
          <Tool $w={23} $on>
            <Ico n="edit" />
          </Tool>
          <Sep $w={4} />
          {items("list cat srch box py sep:6 model")}
          <More $w={10} $ml={3} />
        </Bar>
        <Bar $gap={4}>
          {items(R1B)}
          <More $w={10} $ml={1} />
        </Bar>
      </ToolRow>
      <ToolRow>
        <Bar>
          <Grip $w={9} />
          <BarText $w={55} $pl={6}>
            Editor
            <Drop />
          </BarText>
          {items(R2A)}
          <More $w={11} $ml={3} />
        </Bar>
        <Bar $gap={10}>
          <Grip $w={10} />
          <BarText $w={96} $pl={3}>
            Parcel Editor
            <Drop />
          </BarText>
          {items(R2B)}
          <More $w={11} $ml={2} />
        </Bar>
      </ToolRow>
      <Panels>
        <Panel $w={264} $gap={8}>
          <Head t="Table Of Contents" c="#d2dfea" />
          <PaneBar>
            <Tool $w={21}>
              <Ico n="tocA" s={18} />
            </Tool>
            <Tool $w={22} $on>
              <Ico n="tocB" s={18} />
            </Tool>
            <Tool $w={22}>
              <Ico n="tocC" s={18} />
            </Tool>
            <Tool $w={22}>
              <Ico n="tocD" s={18} />
            </Tool>
            <Sep $w={5} />
            <Tool $w={22}>
              <Ico n="tocE" />
            </Tool>
          </PaneBar>
          <TreeBox>
            <TreeBody>
              <Row $i={7}>
                <Exp />
                <IconSlot $w={23}>
                  <Spacer $w={5} />
                  <Ico n="layers" />
                </IconSlot>
                <Sel>Layers</Sel>
              </Row>
              <Row $i={26}>
                <Exp />
                <IconSlot $w={26}>
                  <Spacer $w={6} />
                  <Ico n="db" />
                </IconSlot>
                D:\Practical5_FabricLayerEditir
              </Row>
              <Row $i={45}>
                <Exp />
                <IconSlot $w={27}>
                  <Spacer $w={5} />
                  <Ico n="fds" />
                </IconSlot>
                h
              </Row>
              <Row $i={64}>
                <Exp />
                <Spacer $w={7} />
                <Check $on />
                NewFabric
              </Row>
              <Row $i={83} $trunk>
                <Exp />
                <Hook $w={7} />
                <Check $on />
                Control
              </Row>
              <Row $i={111} $trunk>
                <Sym $w={23}>
                  <Tri c="#0a56d8" />
                </Sym>
                Others
              </Row>
              <Row $i={111} $trunk>
                <Sym $w={23}>
                  <Tri c="#10e010" />
                </Sym>
                Active
              </Row>
              <Row $i={83} $trunk>
                <Exp />
                <Hook $w={7} />
                <Check />
                LinePoints
              </Row>
              <Row $i={113} $trunk>
                <Sym>
                  <Dot />
                </Sym>
              </Row>
              <Row $i={83} $trunk>
                <Exp />
                <Hook $w={7} />
                <Check />
                Points
              </Row>
              <Row $i={113} $trunk>
                <Sym>
                  <Diamond />
                </Sym>
              </Row>
              <Row $i={83} $trunk>
                <Exp />
                <Hook $w={7} />
                <Check $on />
                Lines
              </Row>
              {lines.map(([t, c, h, dash]) => (
                <Row $i={113} $trunk key={t}>
                  <Sym>
                    <LineSw $c={c} $h={h} $dash={dash} />
                  </Sym>
                  {t}
                </Row>
              ))}
              <Row $i={83}>
                <Exp />
                <Hook $w={7} />
                <Check $on />
                Parcels
              </Row>
              <Row $i={114}>
                <Sym>
                  <Swatch />
                </Sym>
              </Row>
            </TreeBody>
            <HScroll $h={18}>
              <Thumb $l={22} $w={130} />
              <Chev d="l" />
              <Chev d="r" />
            </HScroll>
          </TreeBox>
        </Panel>

        <Panel $w={190} $gap={4}>
          <Head t="Parcel Explorer" c="linear-gradient(#bdd0e4,#cddcea)" pad={2} />
          <ExplBox>
            <ExRow $i={8}>
              <Exp />
              <DotLine $w={5} />
              <Spacer $w={3} />
              <Ico n="par" s={15} />
              <Spacer $w={1} />
              <ExLabel $dim>Parcels</ExLabel>
            </ExRow>
            <ExRow $i={26} $v="map">
              <Exp />
              <DotLine $w={5} />
              <Spacer $w={1} />
              <Ico n="plan" s={14} />
              <Spacer $w={7} />
              <ExLabel>&lt;map&gt;</ExLabel>
            </ExRow>
            <ExRow $i={32} $v="tbl">
              <DotLine $w={30} />
              <Ico n="tbl" s={15} />
              <Spacer $w={5} />
              <ExLabel>Parcels_1_6</ExLabel>
            </ExRow>
            <ExRow $i={13} $v="end">
              <DotLine $w={15} />
              <Ico n="par" s={15} />
              <ExLabel $dim>Unjoined Parcels</ExLabel>
            </ExRow>
          </ExplBox>
        </Panel>

        <Panel $w={271} $gap={5}>
          <Head t="Parcel Details" c="linear-gradient(#a4c0de,#b4cbe2)" pad={4} />
          <DetailBar>
            <Tool $w={21} $on>
              <Ico n="cross2" />
            </Tool>
            {items("chk sep:6 gridd wrench drop sep:10 tr1 tr2 tr3 tr4 tr5 sep:6 tr6")}
          </DetailBar>
          <IconLine>
            <Ico n="pdel" />
          </IconLine>
          <Section>New Construction</Section>
          <Tab>Construction Lines</Tab>
          <TabPanel>
            <FormRow>
              <Btn>Plan...</Btn>
              <SelectBox>
                &lt;map&gt;
                <Chevron viewBox="0 0 12 8">
                  <path d="M1 1l5 5 5-5" fill="none" stroke="#444" strokeWidth="1.600" />
                </Chevron>
              </SelectBox>
            </FormRow>
            <FormRow>
              <Btn>Template...</Btn>
              <FieldBox>
                <SwatchBig />
                Parcels
              </FieldBox>
            </FormRow>
            <CheckLine>
              <BigCheck />
              Show selectable parent lines
            </CheckLine>
            <GridFrame>
              <GridRow>
                <HCell />
                <HCell>Distance</HCell>
                <HCell>Radius</HCell>
                <HCell>Chord</HCell>
                <HCell>To</HCell>
                <HCell>Category</HCell>
              </GridRow>
              {table.map(([d, to], i) => (
                <GridRow key={i}>
                  <Gutter />
                  <Cell $r>{d}</Cell>
                  <Cell />
                  <Cell />
                  <Cell $r $sel={i === 5}>
                    {to}
                  </Cell>
                  <Cell>0 Boun</Cell>
                </GridRow>
              ))}
              <GridFill />
              <HScroll $h={20}>
                <Thumb $l={64} $w={80} />
                <Chev d="l" />
                <Chev d="r" />
              </HScroll>
            </GridFrame>
            <LinkLine href="#about">About entering lines</LinkLine>
          </TabPanel>
        </Panel>

        <MapWrap>
          <MapCanvas viewBox="744 119 520 867">
            <path d={thin} fill="none" stroke="#000" strokeWidth="0.800" />
            <path d={thick} fill="none" stroke="#000" strokeWidth="3" />
            <circle cx="1038" cy="611" r="4.500" fill="#20d8d8" stroke="#067" />
            <path d="M1038 611h4" stroke="#e00" strokeWidth="1.500" />
            {nodes.map(([x, y]) => (
              <rect key={`${x}-${y}`} x={x - 4.500} y={y - 4.500} width="9" height="9" fill="#f00" />
            ))}
            <path d="M1066 622l5 1.500" stroke="#20d8d8" strokeWidth="1.500" />
            <rect x="1090" y="415" width="6" height="6" fill="#1060d0" stroke="#012" />
            <g fontFamily="'Liberation Sans', sans-serif" fontSize="20" fill="#111">
              {big.map(([t, x, y]) => (
                <text key={`${t}${x}`} x={x} y={y}>
                  {t}
                </text>
              ))}
            </g>
            <g fontFamily="'Liberation Sans', sans-serif" fontSize="12" fill="#222">
              {small.map(([t, x, y]) => (
                <text key={`${t}${x}`} x={x} y={y}>
                  {t}
                </text>
              ))}
            </g>
          </MapCanvas>
          <Status>
            <StatusBtn $on $w={20}>
              <Ico n="stA" s={12} />
            </StatusBtn>
            <StatusBtn $w={20}>
              <Ico n="stB" s={12} />
            </StatusBtn>
            <Spacer $w={3} />
            <Sep $w={1} />
            <StatusBtn $w={29}>
              <Ico n="stC" s={12} />
            </StatusBtn>
            <StatusBtn $w={14}>
              <Ico n="stD" s={11} />
            </StatusBtn>
            <StatusBtn $w={28}>
              <Ico n="stE" s={12} />
            </StatusBtn>
          </Status>
        </MapWrap>
      </Panels>
    </Page>
  );
}
